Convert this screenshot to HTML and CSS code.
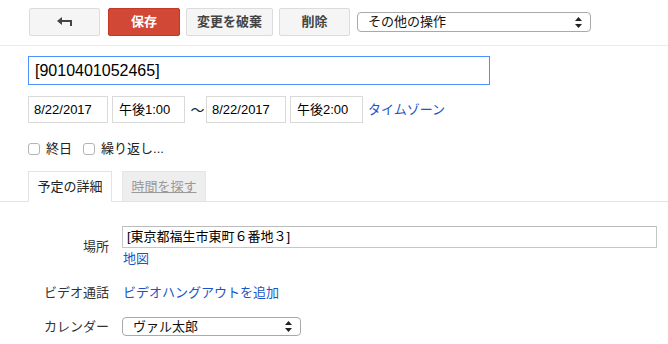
FILE: index.html
```html
<!DOCTYPE html>
<html lang="ja">
<head>
  <meta charset="UTF-8">
  <meta name="viewport" content="width=device-width, initial-scale=1.0">
  <title>予定の編集</title>
  <link rel="stylesheet" href="styles.css">
</head>
<body>
  <div class="toolbar">
    <button class="btn btn-back" title="戻る">
      <svg width="16" height="10" viewBox="0 0 16 10">
        <path d="M0 4 L5 0 L5 3 L15 3 L15 9 L13 9 L13 5 L5 5 L5 8 Z" fill="#444"/>
      </svg>
    </button>
    <button class="btn btn-save">保存</button>
    <button class="btn btn-discard">変更を破棄</button>
    <button class="btn btn-delete">削除</button>
    <div class="select select-more">
      <span>その他の操作</span>
      <svg width="7" height="11" viewBox="0 0 7 11"><path d="M3.5 0 L7 4 L0 4 Z M0 7 L7 7 L3.5 11 Z" fill="#222"/></svg>
    </div>
  </div>

  <div class="head">
    <div class="title-input">[9010401052465]</div>

    <div class="date-row">
      <div class="field date">8/22/2017</div>
      <div class="field time">午後1:00</div>
      <span class="tilde">〜</span>
      <div class="field date">8/22/2017</div>
      <div class="field time">午後2:00</div>
      <a class="link tz" href="javascript:;">タイムゾーン</a>
    </div>

    <div class="check-row">
      <label class="check"><span class="box"></span>終日</label>
      <label class="check"><span class="box"></span>繰り返し...</label>
    </div>
  </div>

  <div class="tabs">
    <div class="tab tab-active">予定の詳細</div>
    <div class="tab tab-off"><a href="javascript:;">時間を探す</a></div>
  </div>

  <div class="details">
    <div class="row row-where">
      <div class="label">場所</div>
      <div class="value">
        <div class="where-input">[東京都福生市東町６番地３]</div>
        <a class="link map" href="javascript:;">地図</a>
      </div>
    </div>
    <div class="row row-video">
      <div class="label">ビデオ通話</div>
      <div class="value"><a class="link" href="javascript:;">ビデオハングアウトを追加</a></div>
    </div>
    <div class="row row-cal">
      <div class="label">カレンダー</div>
      <div class="value">
        <div class="select select-cal">
          <span>ヴァル太郎</span>
          <svg width="7" height="11" viewBox="0 0 7 11"><path d="M3.5 0 L7 4 L0 4 Z M0 7 L7 7 L3.5 11 Z" fill="#222"/></svg>
        </div>
      </div>
    </div>
  </div>
</body>
</html>
```

FILE: styles.css
```css
html,
body {
      overflow: hidden;
}

body {
      margin: 0;
      color: #222;
      background: #fff;
      font: 13px/16px "Liberation Sans", Arial, "Noto Sans CJK JP", sans-serif;
}

a {
      text-decoration: none;
}

.link {
      color: #1a55c8;
}

/* ツールバー */
.toolbar {
      display: flex;
      align-items: center;
      height: 28px;
      padding: 8px 0 9px 29px;
      border-bottom: 1px solid #ebebeb;
}

.btn {
      height: 28px;
      padding: 0;
      margin-right: 6px;
      border: 1px solid #dcdcdc;
      border-radius: 2px;
      background: #f5f5f5;
      color: #444;
      font: bold 13px/26px "Liberation Sans", Arial, "Noto Sans CJK JP", sans-serif;
      box-sizing: border-box;
}

.btn-back {
      width: 71px;
      margin-right: 8px;
      display: flex;
      align-items: center;
      justify-content: center;
}

.btn-save {
      width: 72px;
      background: #d14836;
      border-color: #c53727;
      color: #fff;
}

.btn-discard {
      width: 87px;
}

.btn-delete {
      width: 71px;
      margin-right: 7px;
}

.select {
      display: flex;
      align-items: center;
      justify-content: space-between;
      box-sizing: border-box;
      border: 1px solid #a9a9a9;
      border-radius: 4px;
      background: #fff;
      color: #111;
      padding: 0 8px 0 10px;
}

.select-more {
      width: 234px;
      height: 20px;
      line-height: 18px;
}

/* タイトルと日時 */
.head {
      padding: 10px 0 0 28px;
}

.title-input {
      width: 462px;
      height: 29px;
      box-sizing: border-box;
      border: 1px solid #4d90fe;
      padding: 0 6px;
      font-size: 16px;
      line-height: 27px;
      color: #000;
}

.date-row {
      display: flex;
      align-items: center;
      margin-top: 11px;
}

.field {
      height: 27px;
      box-sizing: border-box;
      border: 1px solid #d9d9d9;
      padding: 0 5px;
      line-height: 25px;
      color: #000;
      margin-right: 4px;
}

.date {
      width: 80px;
}

.time {
      width: 73px;
      padding-left: 6px;
}

.tilde {
      width: 17px;
      text-align: center;
      font-size: 14px;
}

.tz {
      margin-left: 1px;
}

.check-row {
      display: flex;
      margin-top: 18px;
}

.check {
      display: flex;
      align-items: center;
      margin-right: 11px;
      color: #222;
}

.box {
      width: 10px;
      height: 10px;
      border: 1px solid #b4b4b4;
      border-radius: 3px;
      margin-right: 6px;
      background: #fff;
}

/* タブ */
.tabs {
      display: flex;
      padding-left: 28px;
      margin-top: 14px;
      border-bottom: 1px solid #e3e3e3;
}

.tab {
      width: 84px;
      height: 30px;
      box-sizing: border-box;
      text-align: center;
      line-height: 30px;
      margin-bottom: -1px;
}

.tab-active {
      height: 31px;
      background: #fff;
      border: 1px solid #e3e3e3;
      border-bottom: none;
      color: #222;
}

.tab-off {
      margin-left: 10px;
      background: #eee;
      border: 1px solid #e6e6e6;
      border-bottom: none;
      height: 30px;
}

.tab-off a {
      color: #999;
      text-decoration: underline;
}

/* 詳細 */
.details {
      padding-top: 24px;
}

.row {
      display: flex;
      align-items: center;
}

.label {
      width: 109px;
      padding-right: 13px;
      text-align: right;
      color: #333;
}

.where-input {
      width: 535px;
      height: 22px;
      box-sizing: border-box;
      border: 1px solid #c6c6c6;
      border-top-color: #bcbcbc;
      padding: 0 4px;
      line-height: 20px;
      color: #000;
}

.map {
      display: block;
      margin-top: 3px;
      padding-left: 1px;
}

.row-video {
      margin-top: 16px;
      height: 20px;
}

.row-video .link {
      padding-left: 1px;
}

.row-cal {
      margin-top: 14px;
}

.select-cal {
      width: 179px;
      height: 19px;
      line-height: 17px;
      padding-left: 10px;
}
```
